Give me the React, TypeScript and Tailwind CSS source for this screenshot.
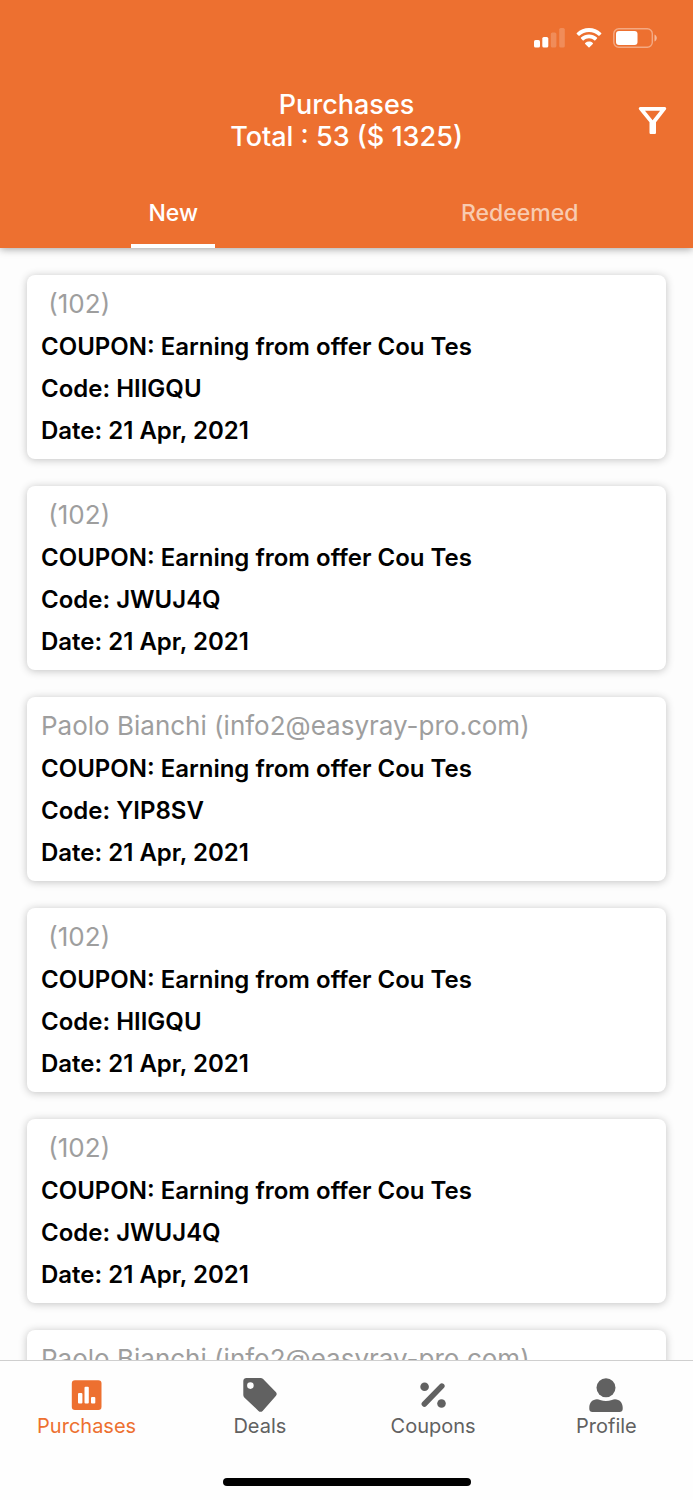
import React from "react";

type Purchase = { customer: string; code: string };

const purchases: Purchase[] = [
  { customer: " (102)", code: "HIIGQU" },
  { customer: " (102)", code: "JWUJ4Q" },
  { customer: "Paolo Bianchi (info2@easyray-pro.com)", code: "YIP8SV" },
  { customer: " (102)", code: "HIIGQU" },
  { customer: " (102)", code: "JWUJ4Q" },
  { customer: "Paolo Bianchi (info2@easyray-pro.com)", code: "YIP8SV" },
];

function StatusBar() {
  return (
    <div className="flex h-19 items-center justify-end gap-[11px] pr-9">
      <svg width="31" height="20" viewBox="0 0 31 20" fill="white" aria-hidden="true">
        <rect x="0" y="12" width="6" height="7.5" rx="1.6" />
        <rect x="8.3" y="9" width="6" height="10.5" rx="1.6" />
        <rect x="16.8" y="4.5" width="5.6" height="15" rx="1.6" opacity="0.2" />
        <rect x="25.2" y="0" width="5.6" height="19.5" rx="1.6" opacity="0.2" />
      </svg>
      <svg width="26" height="20" viewBox="0 0 26 20" fill="white" aria-hidden="true">
        <path d="M13 3.9c3.7 0 7.1 1.4 9.6 3.9.2.2.5.2.7 0l1.9-1.9c.3-.3.3-.7 0-1C21.900 1.700 17.500 0 13 0S4.100 1.700.8 4.900c-.3.3-.3.7 0 1l1.900 1.900c.2.2.5.2.7 0C5.900 5.300 9.300 3.900 13 3.900z" />
        <path d="M13 10.300c2 0 3.900.8 5.400 2.100.2.200.5.200.7 0l1.900-1.900c.3-.3.3-.7 0-1-4.500-4.100-11.500-4.100-16 0-.3.3-.3.7 0 1l1.900 1.900c.2.200.5.200.7 0 1.500-1.300 3.400-2.100 5.400-2.100z" />
        <path d="M16.800 14.600c.3-.3.3-.7 0-1-2.200-1.800-5.400-1.800-7.600 0-.3.3-.3.7 0 1l3.300 3.400c.3.300.7.300 1 0z" transform="translate(0 1.300)" />
      </svg>
      <svg width="44" height="20" viewBox="0 0 44 20" fill="none" aria-hidden="true">
        <rect x="0.800" y="0.800" width="38.500" height="18.400" rx="5" stroke="white" strokeOpacity="0.400" strokeWidth="1.400" />
        <path d="M41.500 6.500v7c1.400-.6 2.300-2 2.300-3.500s-.9-2.900-2.300-3.500z" fill="white" fillOpacity="0.500" />
        <rect x="3" y="3" width="21.500" height="14" rx="3" fill="white" />
      </svg>
    </div>
  );
}

function Header() {
  return (
    <header className="relative z-10 shrink-0 bg-[#ed7030] text-white shadow-[0_1px_8px_rgba(0,0,0,0.38)]">
      <StatusBar />
      <div className="mb-3 grid h-[90px] grid-cols-[80px_1fr_80px] items-center">
        <h1 className="col-start-2 text-center text-[27px] leading-8 font-medium">
          Purchases
          <br />
          Total : 53 ($ 1325)
        </h1>
        <button type="button" aria-label="Filter" className="flex h-20 items-center justify-center">
          <svg width="40" height="40" viewBox="0 0 40 40" fill="white" fillRule="evenodd" aria-hidden="true">
            <path d="M7.300 6h24.400c1.300 0 2 1.500 1.200 2.500L23 21.200v10.500c0 .8-.6 1.400-1.400 1.400h-3.700c-.8 0-1.400-.6-1.400-1.400V21.200L6.100 8.500C5.300 7.500 6 6 7.300 6zM12 9.800l7.600 9.500 7.500-9.500z" />
          </svg>
        </button>
      </div>
      <div role="tablist" className="grid grid-cols-2 text-[23px] font-medium">
        <button type="button" role="tab" aria-selected="true" className="flex h-[70px] justify-center">
          <span className="flex h-full items-center border-b-4 border-white px-[17px] pt-1">New</span>
        </button>
        <button type="button" role="tab" aria-selected="false" className="flex h-[70px] items-center justify-center text-[#f8cbb0]">
          Redeemed
        </button>
      </div>
    </header>
  );
}

function PurchaseCard({ customer, code }: Purchase) {
  return (
    <li className="rounded-lg bg-white px-3.5 pt-[7px] pb-[7px] text-[24px] leading-[42px] font-semibold text-black shadow-[0_1px_8px_rgba(0,0,0,0.24)]">
      <h2 className="mb-px text-[26px] leading-[43px] font-normal whitespace-pre text-[#9e9e9e]">{customer}</h2>
      <p>COUPON: Earning from offer Cou Tes</p>
      <p>Code: {code}</p>
      <p>Date: 21 Apr, 2021</p>
    </li>
  );
}

function PurchasesIcon() {
  return (
    <svg width="40" height="40" viewBox="0 0 40 40" aria-hidden="true">
      <rect x="4.800" y="5.300" width="29.700" height="29.700" rx="3.200" fill="currentColor" />
      <g fill="white">
        <rect x="11" y="18" width="4.400" height="10.500" rx="1" />
        <rect x="17.500" y="11.700" width="4.300" height="16.800" rx="1" />
        <rect x="24" y="22" width="4.300" height="6.500" rx="1" />
      </g>
    </svg>
  );
}

function DealsIcon() {
  return (
    <svg width="40" height="40" viewBox="0 0 40 40" fill="currentColor" fillRule="evenodd" aria-hidden="true">
      <path d="M6.400 3h14.200c1 0 1.800.4 2.500 1l12.700 12.900c1.200 1.200 1.200 2.900 0 4.100L22.600 35.900c-1.200 1.200-2.900 1.200-4.100 0L4.300 22.400c-.7-.7-1-1.500-1-2.500V6c0-1.700 1.400-3 3.100-3zM10.400 7.300a3.300 3.300 0 1 0 0 6.600 3.300 3.300 0 0 0 0-6.600z" />
    </svg>
  );
}

function CouponsIcon() {
  return (
    <svg width="40" height="40" viewBox="0 0 40 40" fill="currentColor" aria-hidden="true">
      <circle cx="11.600" cy="11.800" r="4.300" />
      <circle cx="28.500" cy="28.500" r="4.300" />
      <path d="M11.400 29L28.800 11.100" stroke="currentColor" strokeWidth="5.600" strokeLinecap="round" />
    </svg>
  );
}

function ProfileIcon() {
  return (
    <svg width="40" height="40" viewBox="0 0 40 40" fill="currentColor" aria-hidden="true">
      <circle cx="20" cy="12.700" r="9.500" />
      <path d="M11.500 24.300c1.200 0 2 .3 3.100.7 3.800 1.300 8 1.300 11.800 0 1.100-.4 1.900-.7 3.100-.7 4.400 0 7.700 3.600 7.700 8v1.600c0 1.800-1.300 3.100-3.100 3.100H6.900c-1.800 0-3.100-1.300-3.100-3.100v-1.600c0-4.400 3.300-8 7.700-8z" transform="translate(-.5 0)" />
    </svg>
  );
}

const tabs = [
  { label: "Purchases", Icon: PurchasesIcon, active: true },
  { label: "Deals", Icon: DealsIcon, active: false },
  { label: "Coupons", Icon: CouponsIcon, active: false },
  { label: "Profile", Icon: ProfileIcon, active: false },
];

export default function App() {
  return (
    <div className="flex h-screen flex-col bg-[#fdfdfd] font-['Inter',sans-serif]">
      <Header />
      <main className="min-h-0 flex-1 overflow-y-auto [scrollbar-width:none]">
        <ul className="flex flex-col gap-[27px] p-[27px]">
          {purchases.map((purchase, index) => (
            <PurchaseCard key={index} {...purchase} />
          ))}
        </ul>
      </main>
      <footer className="shrink-0 border-t border-[#cfcfcf] bg-[#fefefe]">
        <nav className="grid grid-cols-4 pt-3.5">
          {tabs.map(({ label, Icon, active }) => (
            <a
              key={label}
              href={"#" + label.toLowerCase()}
              aria-current={active ? "page" : undefined}
              className={
                active
                  ? "flex flex-col items-center text-[20px] leading-[22px] text-[#ed7030]"
                  : "flex flex-col items-center text-[20px] leading-[22px] text-[#616161]"
              }
            >
              <Icon />
              {label}
            </a>
          ))}
        </nav>
        <div className="mx-auto mt-[41px] mb-3.5 h-2 w-[248px] rounded-full bg-black" />
      </footer>
    </div>
  );
}
